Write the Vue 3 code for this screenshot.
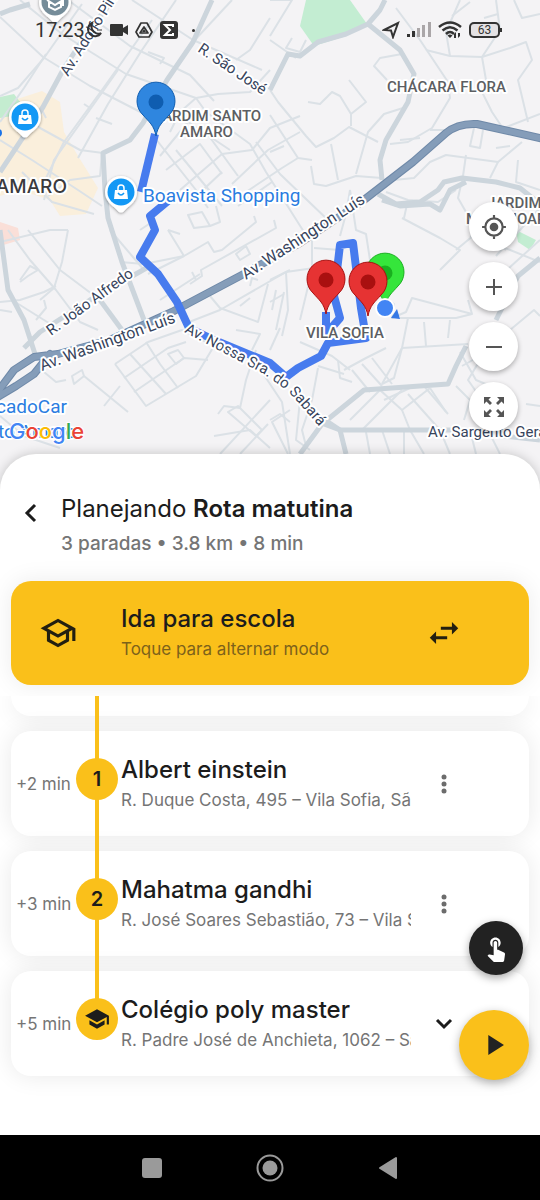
<script setup>
const roads = {
  minor: [
    'M0 17L43 57L90 86L152 118', 'M20 0L62 34L126 74L196 98', 'M68 0L130 46L190 75L214 101', 'M132 0L193 40L262 70', 'M0 96L18 88L44 58L82 4',
    'M46 54L24 88L0 122', 'M118 70L84 118L54 160L44 200', 'M152 20L102 90L64 142L40 190', 'M176 0L142 50L108 104L78 158', 'M232 0L193 42', 'M270 18L250 50L236 60',
    'M0 140L32 160L78 190L102 206', 'M14 108L40 128L80 150L103 153', 'M102 153L100 176L70 180L48 196', 'M22 172L52 202L94 214',
    'M196 98L180 112L170 132', 'M196 98L218 94L250 92L270 70', 'M196 98L206 112L250 144L266 172L304 232', 'M256 142L280 174L330 222', 'M155 138L196 190L208 208', 'M176 150L222 206',
    'M166 170L200 144L222 174', 'M206 132L238 176', 'M180 190L222 154L252 150L270 128L300 116', 'M188 204L222 172', 'M232 184L268 150L300 132', 'M246 192L282 168L298 158', 'M160 156L188 122L230 150', 'M238 206L272 182',
    'M270 40L290 54L296 58', 'M270 0L292 0L270 36', 'M270 90L278 102L306 136L316 147L334 138L349 127L378 142', 'M270 115L298 158L312 160', 'M270 152L284 146',
    'M308 102L320 104L332 92L340 96L351 114L366 102L349 80', 'M351 114L351 126', 'M331 144L338 180', 'M311 166L314 184L326 186L356 176L382 178', 'M356 174L368 132L384 114L403 108',
    'M387 80L374 66L380 58L402 54', 'M396 8L420 40L448 82L450 98L432 128L408 142L390 144', 'M426 50L450 56L482 57L510 48L526 42L532 60L518 80L528 122', 'M450 56L446 32L460 0', 'M482 57L486 80L482 92', 'M482 57L500 30L496 0',
    'M482 92L492 112L504 130', 'M514 0L522 18L540 14', 'M430 130L456 130', 'M400 140L420 138', 'M504 128L540 114',
    'M394 180L414 178L430 162L446 155L498 162L522 142', 'M466 155L463 176', 'M498 162L490 178', 'M474 128L470 146L480 148L483 130', 'M496 148L510 146', 'M463 176L458 198L466 212', 'M518 160L516 182L540 190',
    'M540 208L520 230L496 256', 'M470 236L505 248L540 262', 'M386 192L408 200L438 202L456 190', 'M402 218L440 238L460 250L440 270', 'M408 200L404 218', 'M350 190L346 214L340 236', 'M350 190L356 230L366 234L370 260',
    'M0 242L50 230L68 230', 'M8 230L30 260L56 290L80 322L98 330', 'M68 230L62 262L54 288L40 300', 'M28 230L60 270L100 300',
    'M20 282L28 276L38 270L30 266L20 280', 'M0 302L20 300L44 292L56 286', 'M0 310L12 312', 'M110 230L144 270', 'M120 262L144 264L184 256',
    'M168 230L184 256L208 242L214 252L222 250L256 222L254 216', 'M148 274L168 264L184 256', 'M190 284L202 276L201 270L276 228L274 220', 'M236 254L246 246L250 254L240 260Z', 'M188 215L202 212L210 226L194 228Z', 'M168 230L180 234', 'M210 226L220 222L216 206', 'M192 272L196 280',
    'M160 300L200 274', 'M184 324L220 310L286 272L314 268', 'M210 296L220 308L258 322L268 284', 'M250 286L252 278L258 280',
    'M240 306L250 298', 'M115 364L146 406L196 376L214 346L182 330', 'M115 364L148 342L182 330', 'M124 378L168 348L186 342', 'M134 392L184 358L208 360', 'M146 342L160 364L178 388', 'M130 354L166 394', 'M168 354L178 350L184 358L176 364Z',
    'M44 372L56 382L66 380', 'M72 376L82 370L84 376L74 384Z', 'M84 376L128 412', 'M104 406L120 386', 'M0 416L24 436L60 448', 'M12 300L60 330', 'M36 320L46 308L44 300',
    'M218 414L224 406L240 408L246 380L256 350', 'M228 412L238 406L262 430L256 436Z', 'M214 436L250 430L270 448', 'M236 330L260 334L252 350', 'M220 454L270 400', 'M240 454L268 424', 'M262 372L282 402L290 454',
    'M314 248L340 250', 'M312 230L312 270L300 320', 'M270 280L290 270', 'M270 302L284 294M276 290L272 310', 'M286 272L288 310L282 336',
    'M374 290L394 304L392 318L406 312L412 298L472 314', 'M400 318L456 318L472 314L468 300',
    'M408 318L402 348L382 384', 'M402 348L468 344', 'M450 320L448 338', 'M424 322L426 346', 'M382 384L394 378L402 348', 'M284 292L276 330', 'M300 342L332 356L350 370',
    'M280 328L270 350', 'M344 370L366 358L386 348', 'M352 370L370 392', 'M362 364L382 386', 'M372 358L392 384', 'M318 366L344 374', 'M338 360L340 378L352 382',
    'M460 352L476 380L500 390', 'M462 366L480 356L492 370', 'M456 386L470 400L464 420', 'M480 360L468 380L482 400', 'M350 420L380 390L402 410L430 388', 'M362 430L402 390', 'M402 410L410 430L424 454',
    'M384 400L410 388', 'M408 394L440 430', 'M424 386L448 414', 'M430 388L446 412', 'M404 430L404 454', 'M382 430L390 454', 'M366 432L370 454', 'M440 430L450 454', 'M470 430L476 454', 'M490 434L500 454',
    'M318 368L312 400L302 430L306 446', 'M290 410L272 422L288 454', 'M300 400L296 440L310 450', 'M270 420L280 414L290 422', 'M510 330L534 310L540 316', 'M526 404L540 406', 'M500 276L540 240', 'M456 250L480 230L506 250',
    'M34 118L42 110L46 118', 'M84 104L90 108L88 112', 'M148 52L164 58L160 64', 'M96 118L112 124', 'M140 230L152 222', 'M452 16L470 2', 'M484 18L498 14', 'M292 38L286 48L300 52L306 40'
  ],
  medium: [
    'M0 14L10 10L30 4', 'M212 0L193 42L167 80L143 123L130 140L103 153L105 190L108 218L122 262L144 320', 'M385 0L380 10L368 24L346 34L318 42L300 56L288 54L270 90', 'M368 24L400 50L414 74L408 102L386 140L380 160L382 180',
    'M0 230L8 290L24 320L35 354', 'M24 348L40 332L90 300L150 266', 'M100 300L122 330', 'M378 194L396 204L420 202L438 190L444 182L462 178L496 182L520 188L540 204', 'M382 200L400 206L430 204L440 210L450 190L466 182',
    'M300 454L322 424L364 390L448 384L456 366L466 346', 'M322 418L340 430L346 454', 'M324 424L340 430L450 430L540 440', 'M496 320L518 276L540 258'
  ]
}
const route = ['M155 134L141 192', 'M168 201L150 216L155 230L140 257L158 274L177 302L189 328L214 340L270 363L286 377L298 368L321 356L328 343L366 338L361 308L353 243L340 245L334 296L340 318L326 334L326 312']
const pins = [
  { x: 156, y: 136, fill: '#2f86df', dot: '#0f5db0' },
  { x: 385, y: 307, fill: '#35e53b', dot: '#19b01f' },
  { x: 326, y: 314, fill: '#e63333', dot: '#a91010' },
  { x: 368, y: 316, fill: '#e63333', dot: '#a91010' }
]
const places = [{ x: 25, y: 117 }, { x: 121, y: 192 }]
const stops = [
  { eta: '+2 min', mark: '1', name: 'Albert einstein', address: 'R. Duque Costa, 495 – Vila Sofia, São Paulo' },
  { eta: '+3 min', mark: '2', name: 'Mahatma gandhi', address: 'R. José Soares Sebastião, 73 – Vila Sofia' },
  { eta: '+5 min', mark: '', name: 'Colégio poly master', address: 'R. Padre José de Anchieta, 1062 – Santo Amaro' }
]
</script>

<template>
  <div class="screen">
    <section class="map">
      <svg class="canvas" viewBox="0 0 540 484" preserveAspectRatio="xMidYMin slice">
        <defs>
          <path id="sabara" d="M184 332L224 353L262 373L288 391L326 434" />
          <filter id="soft" x="-30%" y="-30%" width="160%" height="170%"><feDropShadow dx="0" dy="1" stdDeviation="1.5" flood-opacity=".4" /></filter>
        </defs>
        <rect width="540" height="484" fill="#f4f3f5" />
        <path fill="#faefdc" d="M0 110L14 100L42 91L60 102L64 132L78 156L98 188L86 214L60 216L50 200L20 190L0 196Z" />
        <path fill="#c4ecd0" d="M0 97L14 94L20 102L12 116L0 118Z" />
        <path fill="#fadfd8" d="M0 222L18 228L20 240L0 246Z" />
        <path fill="#c3edd2" d="M306 0H350L367 24L346 36L314 46L300 26Z" />
        <path fill="#c3edd2" d="M516 230L536 240L530 250L518 242Z" />
        <g fill="none" stroke-linejoin="round">
          <path v-for="d in roads.minor" :key="d" :d="d" stroke="#dbe1e6" stroke-width="2" />
          <path v-for="d in roads.medium" :key="d" :d="d" stroke="#ccd5dc" stroke-width="5" />
          <path d="M0 172L43 107L63 70L87 33L113 0" stroke="#ccd5dc" stroke-width="5" />
          <g stroke-linecap="round">
            <path v-for="w in [8, 6]" :key="w" :stroke-width="w" :stroke="w === 8 ? '#6f89a8' : '#859db9'" d="M-4 394L14 370L34 357L58 354L110 340L172 312L240 276L300 243L360 203L413 162L446 133Q458 123 477 124L544 139M-4 398L16 386L34 374L50 354" />
          </g>
          <path v-for="d in route" :key="d" :d="d" stroke="#477bee" stroke-width="8" />
        </g>

        <g class="label">
          <g class="area">
            <text x="387" y="92">CHÁCARA FLORA</text>
            <text x="154" y="121">JARDIM SANTO</text>
            <text x="180" y="137">AMARO</text>
            <text x="487" y="208">JARDIM</text>
            <text x="466" y="224">MARAJOARA</text>
            <text x="306" y="338">VILA SOFIA</text>
          </g>
          <text class="town" x="67" y="193" text-anchor="end">SANTO AMARO</text>
          <g class="street">
            <text transform="translate(68 77) rotate(-58)">Av. Adolfo Pinheiro</text>
            <text transform="translate(197 51) rotate(34)">R. São José</text>
            <text transform="translate(51 336) rotate(-36)">R. João Alfredo</text>
            <g class="avenue">
              <text transform="translate(42 371) rotate(-20)">Av. Washington Luís</text>
              <text transform="translate(246 280) rotate(-33)">Av. Washington Luís</text>
            </g>
            <text><textPath href="#sabara">Av. Nossa Sra. do Sabará</textPath></text>
            <text x="428" y="437">Av. Sargento Geraldo</text>
          </g>
          <g class="poi">
            <text x="143" y="202">Boavista Shopping</text>
            <text x="67" y="413" text-anchor="end">MercadoCar</text>
            <text x="76" y="438" text-anchor="end">Santo Amaro</text>
          </g>
        </g>

        <g v-for="p in places" :key="p.x" :transform="`translate(${p.x} ${p.y})`">
          <path fill="#fff" filter="url(#soft)" d="M-16 0A16 16 0 1 1 16 0C16 9 9 13 5 17Q0 24-5 17C-9 13-16 9-16 0Z" />
          <circle r="13.5" fill="#1398f5" />
          <path fill="#fff" d="M-6-2H6L7 7H-7Z" />
          <path fill="none" stroke="#fff" stroke-width="1.5" d="M-3-2V-4Q-3-7 0-7T3-4V-2" />
          <path fill="none" stroke="#1398f5" stroke-width="1.5" d="M-3 1Q0 5 3 1" />
        </g>
        <circle cx="-2" cy="133" r="4" fill="#1a73e8" />
        <g transform="translate(55 2)">
          <path fill="#fff" filter="url(#soft)" d="M-16 0A16 16 0 1 1 16 0C16 9 9 13 5 17Q0 24-5 17C-9 13-16 9-16 0Z" />
          <circle r="13.5" fill="#758c99" />
          <path fill="none" stroke="#fff" stroke-width="2" d="M-6 0V5L0 8L6 5V0M-8-2L0 3L8-2V4" />
        </g>

        <g v-for="p in pins" :key="p.x" :transform="`translate(${p.x} ${p.y})`">
          <path :fill="p.fill" :stroke="p.dot" stroke-width="1" d="M0 0C-2-11-7-14-13-21A19 19 0 1 1 13-21C7-14 2-11 0 0Z" />
          <circle cy="-34" r="7.5" :fill="p.dot" />
        </g>
        <path fill="#3578e5" d="M391 318L397 309L400 319Z" />
        <circle cx="385" cy="308" r="9" fill="#4285f4" stroke="#fff" stroke-width="2" />
        <text class="google" x="9" y="439"><tspan fill="#4285f4">G</tspan><tspan fill="#ea4335">o</tspan><tspan fill="#fbbc05">o</tspan><tspan fill="#4285f4">g</tspan><tspan fill="#34a853">l</tspan><tspan fill="#ea4335">e</tspan></text>
      </svg>

      <div class="status">
        <time>17:23</time>
        <svg width="18" height="18" viewBox="0 0 18 18"><path fill="none" stroke="#333" stroke-width="2" d="M7 2A7 7 0 1 0 16 12Q13 14 9 11Q5 7 7 2Z" /><path stroke="#333" stroke-width="1" d="M10 5L14 3M12 9H17" /></svg>
        <svg width="18" height="18" viewBox="0 0 18 18"><path fill="#333" d="M0 4Q0 3 1 3H12Q13 3 13 4V7L18 4V14L13 11V14Q13 15 12 15H1Q0 15 0 14Z" /></svg>
        <svg width="18" height="18" viewBox="0 0 18 18"><path fill="none" stroke="#333" stroke-width="1.7" stroke-linejoin="round" d="M6 2H12L17 11L14 16H4L1 11ZM9 6L13 12H5Z" /><path fill="#333" d="M9 8L11 11H7Z" /></svg>
        <svg width="18" height="18" viewBox="0 0 18 18"><rect width="18" height="18" rx="3" fill="#333" /><path fill="none" stroke="#fff" stroke-width="2" d="M13 6V4H5L10 9L5 14H13V12" /></svg>
        <i class="dot"></i>
        <span class="spacer"></span>
        <svg width="18" height="18" viewBox="0 0 18 18"><path fill="none" stroke="#333" stroke-width="2" stroke-linejoin="miter" d="M2 9L16 2L11 16L9 9.500Z" /></svg>
        <svg width="24" height="18" viewBox="0 0 24 18"><path fill="#333" d="M0 13H3V16H0ZM5 10H8V16H5Z" /><path fill="#aaa6a8" d="M10 7H13V16H10ZM15 4H18V16H15ZM21 1H24V16H21Z" /></svg>
        <svg width="24" height="18" viewBox="0 0 24 18"><g fill="none" stroke="#333" stroke-width="2.5"><path d="M1 6Q12-3 23 6" /><path d="M4.500 9.500Q12 3 19.500 9.500" /><path d="M8 13Q12 9 16 13" /></g><path fill="#333" d="M9.500 14.500Q12 12.500 14.500 14.500L12 17ZM16 13L18 11V17H16ZM20 12H22V15L20 17Z" /></svg>
        <span class="battery">63</span>
      </div>

      <div class="controls">
        <button aria-label="Minha localização"><svg width="26" height="26" viewBox="0 0 24 24"><circle cx="12" cy="12" r="4" /><path fill="none" stroke="#555" stroke-width="2" d="M12 4A8 8 0 1 0 12 20A8 8 0 1 0 12 4ZM12 1V4M12 20V23M1 12H4M20 12H23" /></svg></button>
        <button aria-label="Aproximar"><svg width="28" height="28" viewBox="0 0 28 28"><path d="M13 6H15V13H22V15H15V22H13V15H6V13H13Z" /></svg></button>
        <button aria-label="Afastar"><svg width="28" height="28" viewBox="0 0 28 28"><path d="M6 13H22V15H6Z" /></svg></button>
        <button aria-label="Tela cheia"><svg width="28" height="28" viewBox="0 0 28 28"><g id="corner"><path d="M4 4H11L8.500 6.500L12 10L10 12L6.500 8.500L4 11Z" /></g><use href="#corner" transform="rotate(90 14 14)" /><use href="#corner" transform="rotate(180 14 14)" /><use href="#corner" transform="rotate(270 14 14)" /></svg></button>
      </div>
    </section>

    <main class="sheet">
      <header class="head">
        <button class="back" aria-label="Voltar"><svg width="20" height="24" viewBox="0 0 20 24"><path fill="none" stroke="#1c1c1c" stroke-width="3" d="M15 4L7 12L15 20" /></svg></button>
        <div>
          <h1>Planejando <b>Rota matutina</b></h1>
          <p>3 paradas • 3.8 km • 8 min</p>
        </div>
      </header>

      <button class="mode">
        <svg class="cap" width="38" height="38" viewBox="0 0 24 24"><path d="M12 3L1 9l4 2.180v6L12 21l7-3.820v-6l2-1.090V17h2V9L12 3zm6.820 6L12 12.720 5.180 9 12 5.280 18.820 9zM17 15.990l-5 2.730-5-2.730v-3.720L12 15l5-2.730v3.720z" /></svg>
        <span class="text"><strong class="name">Ida para escola</strong><span class="address">Toque para alternar modo</span></span>
        <svg class="swap" width="38" height="38" viewBox="0 0 24 24"><path d="M6.990 11L3 15l3.990 4v-3H14v-2H6.990v-3zM21 9l-3.990-4v3H10v2h7.010v3L21 9z" /></svg>
      </button>

      <ol class="stops">
        <li class="stub"><span class="rail"></span></li>
        <li v-for="s in stops" :key="s.name" class="stop">
          <span class="eta">{{ s.eta }}</span>
          <span class="rail" :class="{ last: !s.mark }">
            <span class="badge">
              <template v-if="s.mark">{{ s.mark }}</template>
              <svg v-else width="26" height="26" viewBox="0 0 24 24"><path d="M5 13.180v4L12 21l7-3.820v-4L12 17l-7-3.820zM12 3L1 9l11 6 9-4.910V17h2V9L12 3z" /></svg>
            </span>
          </span>
          <span class="text"><strong class="name">{{ s.name }}</strong><span class="address">{{ s.address }}</span></span>
          <button class="more" :aria-label="s.mark ? 'Opções' : 'Expandir'">
            <svg v-if="s.mark" width="28" height="28" viewBox="0 0 28 28"><g fill="#6c6c6c"><circle cx="14" cy="7" r="2.500" /><circle cx="14" cy="14" r="2.500" /><circle cx="14" cy="21" r="2.500" /></g></svg>
            <svg v-else width="28" height="28" viewBox="0 0 28 28"><path fill="none" stroke="#1c1c1c" stroke-width="3" d="M7 10L14 17L21 10" /></svg>
          </button>
        </li>
      </ol>

      <div class="fabs">
        <button class="touch" aria-label="Selecionar"><svg width="28" height="28" viewBox="0 0 24 24"><path fill="#fff" d="M9 11.240V7.500C9 6.120 10.120 5 11.500 5S14 6.120 14 7.500v3.740c1.210-.81 2-2.180 2-3.740C16 5.010 13.990 3 11.500 3S7 5.010 7 7.500c0 1.560.79 2.930 2 3.740zm9.840 4.630l-4.540-2.260c-.17-.07-.35-.11-.54-.11H13v-6c0-.83-.67-1.500-1.500-1.500S10 6.670 10 7.500v10.740l-3.430-.72c-.08-.01-.15-.03-.24-.03-.31 0-.59.13-.79.33l-.79.8 4.940 4.940c.27.27.65.44 1.060.44h6.790c.75 0 1.330-.55 1.440-1.280l.75-5.270c.01-.07.02-.14.02-.2 0-.62-.38-1.160-.91-1.380z" /></svg></button>
        <button class="play" aria-label="Iniciar"><svg width="34" height="34" viewBox="0 0 24 24"><path d="M8 5v14l11-7z" /></svg></button>
      </div>
    </main>

    <nav class="system">
      <button aria-label="Recentes"><svg width="28" height="28" viewBox="0 0 28 28"><rect x="4" y="4" width="20" height="20" rx="3" /></svg></button>
      <button aria-label="Início"><svg width="28" height="28" viewBox="0 0 28 28"><circle cx="14" cy="14" r="12.500" fill="none" stroke="#9a9a9a" stroke-width="2" /><circle cx="14" cy="14" r="7.500" /></svg></button>
      <button aria-label="Voltar ao anterior"><svg width="28" height="28" viewBox="0 0 28 28"><path stroke="#9a9a9a" stroke-width="2" stroke-linejoin="round" d="M6 14L22 4V24Z" /></svg></button>
    </nav>
  </div>
</template>

<style>
body {
  margin: 0;
}
</style>

<style scoped>
* {
  box-sizing: border-box;
}
.screen {
  display: flex;
  flex-direction: column;
  min-height: 100vh;
  background: #fff;
  color: #1c1c1c;
  font-family: Inter, "Open Sans", sans-serif;
}
button {
  display: flex;
  align-items: center;
  justify-content: center;
  padding: 0;
  border: 0;
  background: none;
  color: inherit;
  font: inherit;
  text-align: left;
}
svg {
  display: block;
  flex: none;
}
.map {
  position: relative;
  flex: 1;
  min-height: 360px;
  overflow: hidden;
}
.canvas {
  position: absolute;
  inset: 0;
  width: 100%;
  height: 100%;
}
.label {
  font-family: Roboto, sans-serif;
  fill: #37445c;
  stroke: #fff;
  stroke-width: 4px;
  stroke-linejoin: round;
  paint-order: stroke;
}
.area {
  font: 500 15px Roboto, sans-serif;
  fill: #5c5e62;
}
.town {
  font: 500 19px Inter, sans-serif;
  fill: #3a3a3c;
}
.street {
  font-size: 15px;
}
.avenue {
  font-size: 16px;
}
.poi {
  font-size: 19px;
  fill: #2a7de1;
}
.google {
  font: 500 22px Inter, sans-serif;
  stroke: #fff;
  stroke-width: 2px;
  paint-order: stroke;
}
.status {
  position: absolute;
  inset: 0 0 auto;
  display: flex;
  align-items: center;
  gap: 7px;
  padding: 18px 40px 0 35px;
  color: #333;
  font: 20px/24px Roboto, sans-serif;
}
.status time {
  margin-right: -7px;
}
.dot {
  width: 3px;
  height: 3px;
  margin-left: 7px;
  border-radius: 50%;
  background: #333;
}
.spacer {
  flex: 1;
}
.battery {
  position: relative;
  width: 31px;
  height: 16px;
  border: 2px solid #333;
  border-radius: 5px;
  background: #e4e2e4;
  font-size: 12px;
  line-height: 12px;
  text-align: center;
}
.battery::after {
  content: "";
  position: absolute;
  top: 4px;
  right: -4px;
  width: 2px;
  height: 4px;
  background: #333;
}
.controls {
  position: absolute;
  right: 22px;
  bottom: 53px;
  display: grid;
  gap: 11px;
}
.controls button {
  width: 49px;
  height: 49px;
  border-radius: 50%;
  background: #fff;
  box-shadow: 0 2px 5px rgba(0, 0, 0, 0.3);
  fill: #555;
}
.sheet {
  position: relative;
  margin-top: -30px;
  border-radius: 36px 36px 0 0;
  background: #fff;
  box-shadow: 0 0 12px rgba(0, 0, 0, 0.2);
}
.head {
  display: flex;
  align-items: flex-start;
  padding: 37px 16px 20px 20px;
}
.back {
  width: 20px;
  height: 44px;
  margin-right: 21px;
}
h1 {
  margin: 0;
  font-size: 24px;
  font-weight: 400;
  line-height: 36px;
}
h1 b {
  font-weight: 600;
}
.head p {
  margin: 0;
  color: #757575;
  font-size: 19px;
  font-weight: 500;
  line-height: 34px;
}
.mode {
  display: grid;
  grid-template-columns: 110px minmax(0, 1fr) 170px;
  align-items: center;
  width: calc(100% - 22px);
  height: 104px;
  margin: 0 11px 11px;
  border-radius: 20px;
  background: #fac01a;
  box-shadow: 0 0 24px rgba(0, 0, 0, 0.08);
  fill: #231f10;
}
.cap {
  margin-left: 28px;
}
.swap {
  margin-left: 66px;
}
.text {
  display: block;
  min-width: 0;
  padding-top: 2px;
}
.name {
  display: block;
  font-size: 24px;
  font-weight: 500;
  line-height: 30px;
}
.address {
  display: block;
  overflow: hidden;
  color: #757575;
  font-size: 17px;
  line-height: 30px;
  white-space: nowrap;
}
.mode .address {
  color: #7d621a;
}
.stops {
  display: grid;
  gap: 15px;
  margin: 0;
  padding: 0 11px 59px;
  overflow: hidden;
  list-style: none;
}
.stub,
.stop {
  display: grid;
  grid-template-columns: 60px 42px minmax(0, 1fr) 48px;
  align-items: center;
  height: 105px;
  padding: 0 61px 0 5px;
  border-radius: 20px;
  background: #fff;
  box-shadow: 0 0 24px rgba(0, 0, 0, 0.09);
}
.stub {
  height: 20px;
  border-radius: 0 0 20px 20px;
}
.stub .rail {
  grid-column: 2;
}
.stop .text {
  margin: 0 9px 0 3px;
}
.eta {
  color: #757575;
  font-size: 17px;
  white-space: nowrap;
}
.rail {
  position: relative;
  display: flex;
  align-items: center;
  align-self: stretch;
  padding-bottom: 10px;
}
.rail::before {
  content: "";
  position: absolute;
  top: 0;
  bottom: -15px;
  left: 19px;
  width: 4px;
  background: #fac01a;
}
.rail.last::before {
  bottom: 50%;
}
.badge {
  position: relative;
  display: flex;
  align-items: center;
  justify-content: center;
  width: 42px;
  height: 42px;
  border-radius: 50%;
  background: #fac01a;
  fill: #1c1c1c;
  font-size: 20px;
  font-weight: 600;
}
.more {
  width: 48px;
  height: 48px;
}
.fabs {
  position: absolute;
  right: 11px;
  bottom: 55px;
  display: flex;
  flex-direction: column;
  align-items: flex-end;
  gap: 35px;
}
.touch {
  width: 54px;
  height: 54px;
  margin-right: 6px;
  border-radius: 50%;
  background: #222;
  box-shadow: 0 3px 8px rgba(0, 0, 0, 0.35);
}
.play {
  width: 70px;
  height: 70px;
  border-radius: 50%;
  background: #fac01a;
  box-shadow: 0 3px 10px rgba(0, 0, 0, 0.3);
  fill: #222;
}
.system {
  display: flex;
  align-items: center;
  justify-content: center;
  gap: 90px;
  height: 65px;
  background: #000;
  fill: #9a9a9a;
}
</style>
